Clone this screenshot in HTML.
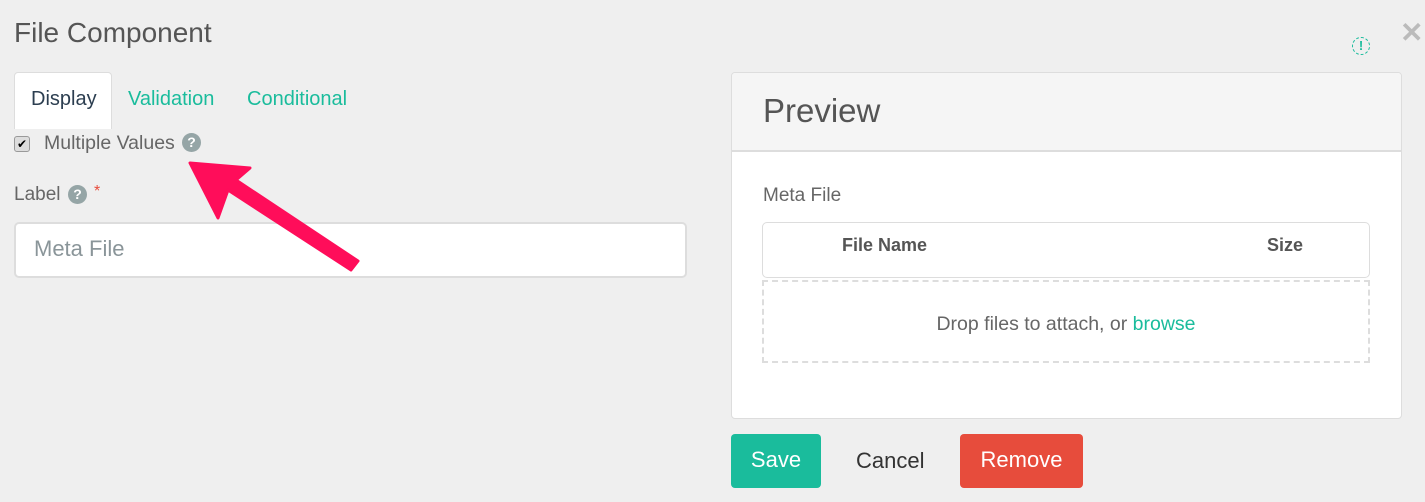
<html><head><style>
body{margin:0;width:1425px;height:502px;background:#efefef;font-family:"Liberation Sans",sans-serif;position:relative;overflow:hidden}
.a{position:absolute}
</style></head><body>
<div class="a" style="left:14px;top:17px;font-size:28px;color:#555">File Component</div>
<div class="a" style="left:1352px;top:37px;width:16px;height:16px;border:1.5px dashed #1abc9c;border-radius:50%;color:#1abc9c;font-size:13px;font-weight:bold;text-align:center;line-height:16px">!</div>
<div class="a" style="left:1400px;top:16px;font-size:28px;color:#bbb;font-weight:bold">✕</div>
<div class="a" style="left:14px;top:72px;width:96px;height:56px;background:#fff;border:1px solid #ddd;border-bottom:none;border-radius:4px 4px 0 0"></div>
<div class="a" style="left:31px;top:88px;font-size:20px;color:#2c3e50">Display</div>
<div class="a" style="left:128px;top:88px;font-size:20px;color:#1abc9c">Validation</div>
<div class="a" style="left:247px;top:88px;font-size:20px;color:#1abc9c">Conditional</div>
<div class="a" style="left:14px;top:136px;width:14px;height:14px;border:1px solid #999;border-radius:3px;background:#ddd;font-size:12px;line-height:14px;text-align:center">✔</div>
<div class="a" style="left:44px;top:132px;font-size:19.5px;color:#666">Multiple Values</div>
<div class="a" style="left:182px;top:133px;width:19px;height:19px;border-radius:50%;background:#95a5a6;color:#fff;font-size:14px;font-weight:bold;text-align:center;line-height:19px">?</div>
<div class="a" style="left:14px;top:184px;font-size:19px;color:#666">Label</div>
<div class="a" style="left:68px;top:185px;width:19px;height:19px;border-radius:50%;background:#95a5a6;color:#fff;font-size:14px;font-weight:bold;text-align:center;line-height:19px">?</div>
<div class="a" style="left:94px;top:183px;font-size:16px;color:#e74c3c">*</div>
<div class="a" style="left:14px;top:222px;width:669px;height:52px;background:#fff;border:2px solid #ddd;border-radius:5px"></div>
<div class="a" style="left:34px;top:236px;font-size:22px;color:#8a9599">Meta File</div>
<svg class="a" style="left:0;top:0" width="400" height="300"><polygon points="190,163 250,168 236,180 358,261 351,270 228,190 218,218" fill="#ff0d5a" stroke="#ff0d5a" stroke-width="3" stroke-linejoin="round"/></svg>
<div class="a" style="left:731px;top:72px;width:669px;height:345px;background:#fff;border:1px solid #ddd;border-radius:4px;overflow:hidden">
<div style="height:77px;background:#f5f5f5;border-bottom:2px solid #ddd"></div></div>
<div class="a" style="left:763px;top:92px;font-size:33px;color:#555">Preview</div>
<div class="a" style="left:763px;top:185px;font-size:19px;color:#666">Meta File</div>
<div class="a" style="left:762px;top:222px;width:606px;height:54px;border:1px solid #ddd;border-radius:5px"></div>
<div class="a" style="left:842px;top:235px;font-size:18px;font-weight:bold;color:#555">File Name</div>
<div class="a" style="left:1267px;top:235px;font-size:18px;font-weight:bold;color:#555">Size</div>
<div class="a" style="left:762px;top:280px;width:604px;height:79px;border:2px dashed #ddd"></div>
<div class="a" style="left:762px;top:313px;width:608px;text-align:center;font-size:19.5px;color:#666">Drop files to attach, or <span style="color:#1abc9c">browse</span></div>
<div class="a" style="left:731px;top:434px;width:90px;height:54px;background:#1abc9c;border-radius:4px;color:#fff;font-size:22px;text-align:center;line-height:52px">Save</div>
<div class="a" style="left:856px;top:448px;font-size:22px;color:#333">Cancel</div>
<div class="a" style="left:960px;top:434px;width:123px;height:54px;background:#e74c3c;border-radius:4px;color:#fff;font-size:22px;text-align:center;line-height:52px">Remove</div>
</body></html>
